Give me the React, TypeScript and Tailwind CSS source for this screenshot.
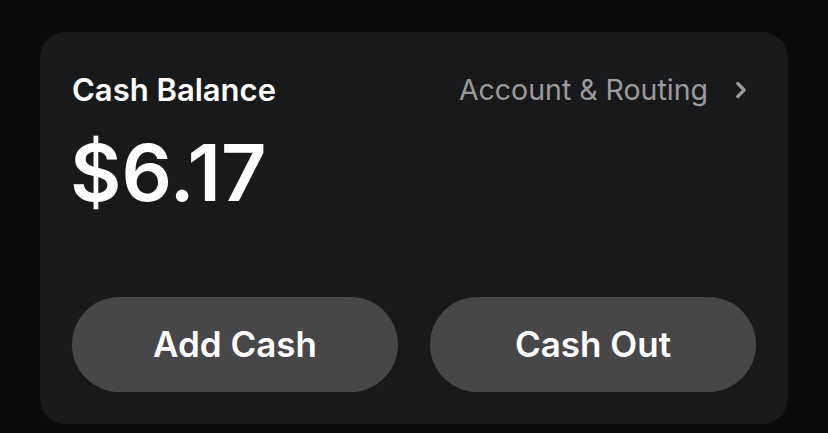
import { ChevronRight } from 'lucide-react';

export default function App() {
  return (
    <div className="min-h-screen w-full bg-[#0b0b0d] px-10 pt-8" style={{ fontFamily: 'Inter, "Noto Sans", sans-serif' }}>
      <div className="flex h-[392px] w-[748px] flex-col rounded-[26px] bg-[#18191b] px-8 pb-8 pt-[40px]">
        <div className="flex items-center justify-between">
          <span className="text-[31px] font-semibold leading-[36px] text-white">Cash Balance</span>
          <div className="flex items-center gap-[20px] pr-[2px] text-[#9b9b9d]">
            <span className="text-[28.5px] font-normal leading-[36px]">Account &amp; Routing</span>
            <ChevronRight className="h-[26px] w-[26px]" strokeWidth={3} />
          </div>
        </div>
        <div className="mt-[24px] -ml-[2px] text-[79px] font-semibold leading-[80px] text-white">$6.17</div>
        <div className="mt-auto grid grid-cols-2 gap-8">
          <button className="h-[95px] rounded-full bg-[#474749] text-[35px] font-semibold text-white">Add Cash</button>
          <button className="h-[95px] rounded-full bg-[#474749] text-[35px] font-semibold text-white">Cash Out</button>
        </div>
      </div>
    </div>
  );
}
